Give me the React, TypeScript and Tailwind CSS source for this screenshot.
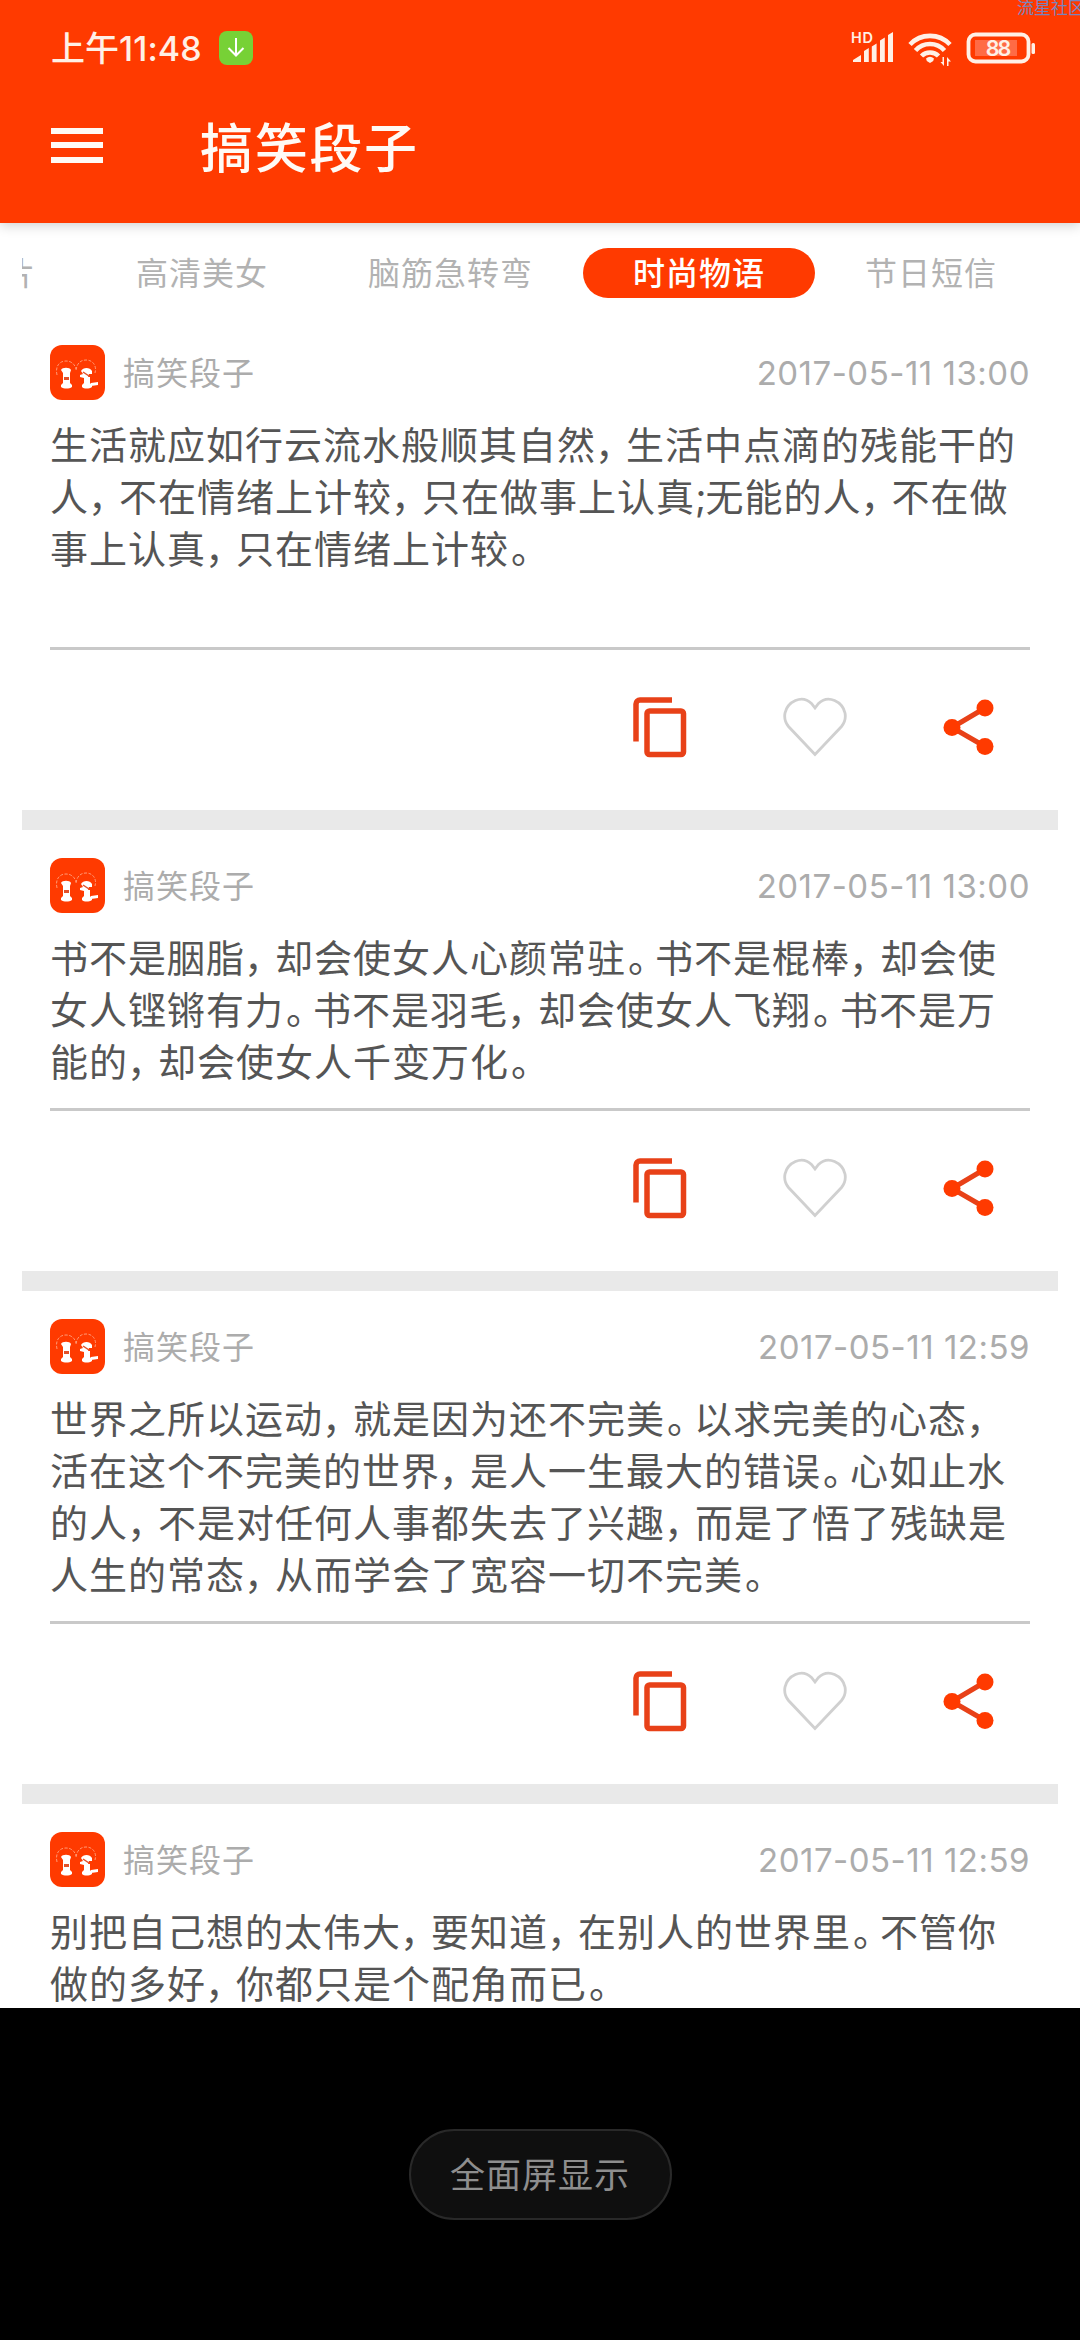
type Post = { id: number; time: string; lines: string[] };

const tabs = [
  { label: "片", active: false },
  { label: "高清美女", active: false },
  { label: "脑筋急转弯", active: false },
  { label: "时尚物语", active: true },
  { label: "节日短信", active: false },
];

const posts: Post[] = [
  {
    id: 1,
    time: "2017-05-11 13:00",
    lines: [
      "生活就应如行云流水般顺其自然，生活中点滴的残能干的",
      "人，不在情绪上计较，只在做事上认真;无能的人，不在做",
      "事上认真，只在情绪上计较。",
      "",
    ],
  },
  {
    id: 2,
    time: "2017-05-11 13:00",
    lines: [
      "书不是胭脂，却会使女人心颜常驻。书不是棍棒，却会使",
      "女人铿锵有力。书不是羽毛，却会使女人飞翔。书不是万",
      "能的，却会使女人千变万化。",
    ],
  },
  {
    id: 3,
    time: "2017-05-11 12:59",
    lines: [
      "世界之所以运动，就是因为还不完美。以求完美的心态，",
      "活在这个不完美的世界，是人一生最大的错误。心如止水",
      "的人，不是对任何人事都失去了兴趣，而是了悟了残缺是",
      "人生的常态，从而学会了宽容一切不完美。",
    ],
  },
  {
    id: 4,
    time: "2017-05-11 12:59",
    lines: [
      "别把自己想的太伟大，要知道，在别人的世界里。不管你",
      "做的多好，你都只是个配角而已。",
    ],
  },
];

// punctuation is set narrower than a full character cell
const punctuation: Record<string, string> = {
  "，": "-ml-[1px] tracking-[-7px]",
  "。": "pl-[2px] tracking-[-11px]",
  ";": "tracking-[-1px]",
};

function StatusBar() {
  return (
    <div className="flex h-[96px] items-center justify-between pl-[51px] pr-[45px] text-[#fff0e6]">
      <div className="flex items-center">
        <span className="w-[168px] whitespace-nowrap pt-[2px] text-[34px] font-medium leading-[40px]">
          上午<span className="tracking-[0.1px]">11:48</span>
        </span>
        <svg className="h-[34px] w-[34px]" viewBox="0 0 34 34" fill="none">
          <rect width="34" height="34" rx="8" fill="#77d136" />
          <path d="M17 7v17M9.500 17l7.500 7.500 7.500-7.500" stroke="#fff" strokeWidth="2" />
        </svg>
      </div>
      <svg className="h-[40px] w-[184px]" viewBox="851 28 184 40" fill="currentColor">
        <text x="851" y="43" fontSize="14.500" fontWeight="600" letterSpacing="0.8">HD</text>
        <path d="M853 62v-2l8-5v7zM864 62V51l4.800-3v14zM871.800 62V46.500l4.800-3V62zM880 62V40.500l4.800-3V62zM888 62V35l5-3v30z" />
        <g fill="none" stroke="currentColor" strokeWidth="4.600">
          <path d="M910 44.500a27.500 27.500 0 0 1 40 0" />
          <path d="M915.500 50.500a19.500 19.500 0 0 1 29 0" />
          <path d="M921.500 56a12 12 0 0 1 17 0" />
        </g>
        <path d="M926 58.500q4-3.500 8 0l-.8 2.500-3.200 2-3.200-2z" />
        <path d="M944 57v9l-3.500-4h2V57zM947 66v-9l4 4.500h-2.500V66z" />
        <rect x="968.500" y="34.500" width="60" height="27" rx="7" fill="none" stroke="currentColor" strokeWidth="3.800" />
        <rect x="975" y="40" width="42" height="16" fill="#ff6b45" />
        <rect x="1031.500" y="43" width="3.500" height="11" rx="1.500" />
        <text x="997.500" y="56" fontSize="21.500" fontWeight="600" textAnchor="middle" letterSpacing="-2">88</text>
      </svg>
    </div>
  );
}

function Header() {
  return (
    <header className="relative z-10 h-[223px] bg-[#ff3a00] shadow-[0_2px_12px_rgba(0,0,0,0.2)]">
      <StatusBar />
      <div className="flex h-[98px] items-center pl-[51px] text-[#fffaf5]">
        <div className="flex w-[52px] flex-col gap-[8.500px]">
          <i className="h-[6px] bg-current" />
          <i className="h-[6px] bg-current" />
          <i className="h-[6px] bg-current" />
        </div>
        <h1 className="ml-[97px] pt-[7px] text-[53px] font-medium leading-[60px] tracking-[1.700px]">搞笑段子</h1>
      </div>
      <span className="absolute right-[-5px] top-0 text-[17px] leading-[17px] text-[#7a84bd]">流星社区</span>
    </header>
  );
}

function TabBar() {
  return (
    <nav className="mx-[22px] flex h-[94px] items-center overflow-hidden pt-[6px]">
      {tabs.map(({ label, active }, i) => (
        <span
          key={label}
          className={`flex h-[50px] shrink-0 items-center whitespace-nowrap pr-[50px] pt-[2px] text-[32px] tracking-[1px] ${
            i === 0 ? "-ml-[19px]" : "pl-[50px]"
          } ${active ? "rounded-full bg-[#ff3a00] font-medium text-white" : "text-[#b2b2b2]"}`}
        >
          {label}
        </span>
      ))}
    </nav>
  );
}

function Avatar() {
  return (
    <svg className="h-[55px] w-[55px]" viewBox="0 0 55 55" fill="#fff">
      <rect width="55" height="55" rx="12" fill="#ff3a00" />
      <g fill="none" stroke="#ffb193" strokeWidth="0.8" strokeDasharray="3 1.500">
        <path d="M7 30c-2-8 2-14 9-14 6 0 9 4 10 8M26 25c1-7 5-10 10-10 7 0 11 6 9 13" />
      </g>
      <path d="M11 25c1-3 9-3 10 0l-1 3v10l2 2v2c-3 2-8 2-11 0v-2l2-2V28z" />
      <path d="M14 32h5v3h-5z" fill="#e2512a" />
      <path d="M31 26c2-4 9-4 11 0v3h-3l-1 3h2v6l2 2v2c-3 2-8 2-10 0v-2l2-2v-5l-4-1v-2l3-1z" />
      <path d="M33 27l6 4" stroke="#e2512a" strokeWidth="1.500" />
      <path d="M41 38l7-1v3l-7 1z" />
    </svg>
  );
}

function Line({ text }: { text: string }) {
  return (
    <p className="h-[52px] whitespace-nowrap">
      {text.split(/([，。;])/).map((part, i) => (
        <span key={i} className={punctuation[part]}>{part}</span>
      ))}
    </p>
  );
}

function Actions() {
  return (
    <div className="flex h-[160px] items-center justify-end pb-[6px] pr-[36px]">
      <svg className="h-[61px] w-[54px]" viewBox="0 0 54 61" fill="none" stroke="#e84118" strokeWidth="5.500">
        <path d="M3 44.500V7a4 4 0 0 1 4-4h32" />
        <rect x="14" y="14" width="36.500" height="43.500" rx="2.500" />
      </svg>
      <svg className="ml-[95px] h-[60px] w-[66px]" viewBox="0 0 66 60" fill="none" stroke="#d0d0d0" strokeWidth="2.800">
        <path d="M33 57.500L6.500 29.500A16.500 16.500 0 0 1 3 16C5.500 5 19.500-3 29.500 6.500L33 11l3.500-4.500C46.500-3 60.500 5 63 16a16.500 16.500 0 0 1-3.500 13.500z" />
      </svg>
      <svg className="ml-[95px] h-[56px] w-[51px]" viewBox="0 0 51 56" fill="#ff3a00">
        <path d="M42 9L9 28.500 42 47.500" fill="none" stroke="#e84118" strokeWidth="5" />
        <circle cx="42" cy="9" r="8.500" />
        <circle cx="9" cy="28.500" r="8.500" />
        <circle cx="42" cy="47.500" r="8.500" />
      </svg>
    </div>
  );
}

function PostCard({ post }: { post: Post }) {
  return (
    <article className="border-b-[20px] border-[#e9e9e9] px-[28px] pt-[28px]">
      <div className="flex h-[55px] items-center text-[#acacac]">
        <Avatar />
        <span className="ml-[18px] pt-[3px] text-[32px] tracking-[1px]">搞笑段子</span>
        <time className="ml-auto pt-[3px] text-[33px] tracking-[0.500px]">{post.time}</time>
      </div>
      <div className="mb-[20px] mt-[19px] text-[38px] leading-[52px] tracking-[1px] text-[#555]">
        {post.lines.map((line, i) => (
          <Line key={i} text={line} />
        ))}
      </div>
      <div className="h-[3px] bg-[#c9c9c9]" />
      <Actions />
    </article>
  );
}

export default function App() {
  return (
    <div
      lang="zh-CN"
      className="flex h-[2340px] w-[1080px] flex-col overflow-hidden bg-white font-['Inter','Noto_Sans_CJK_SC',sans-serif]"
    >
      <Header />
      <TabBar />
      <main className="mx-[22px] h-[1691px] shrink-0 overflow-hidden">
        {posts.map((post) => (
          <PostCard key={post.id} post={post} />
        ))}
      </main>
      <footer className="flex h-[332px] shrink-0 justify-center bg-black pt-[121px]">
        <button className="h-[91px] w-[263px] rounded-full border-2 border-[#292929] bg-[#0f0f0f] pt-[2px] text-[35px] tracking-[1px] text-[#8e8e8e]">
          全面屏显示
        </button>
      </footer>
    </div>
  );
}
